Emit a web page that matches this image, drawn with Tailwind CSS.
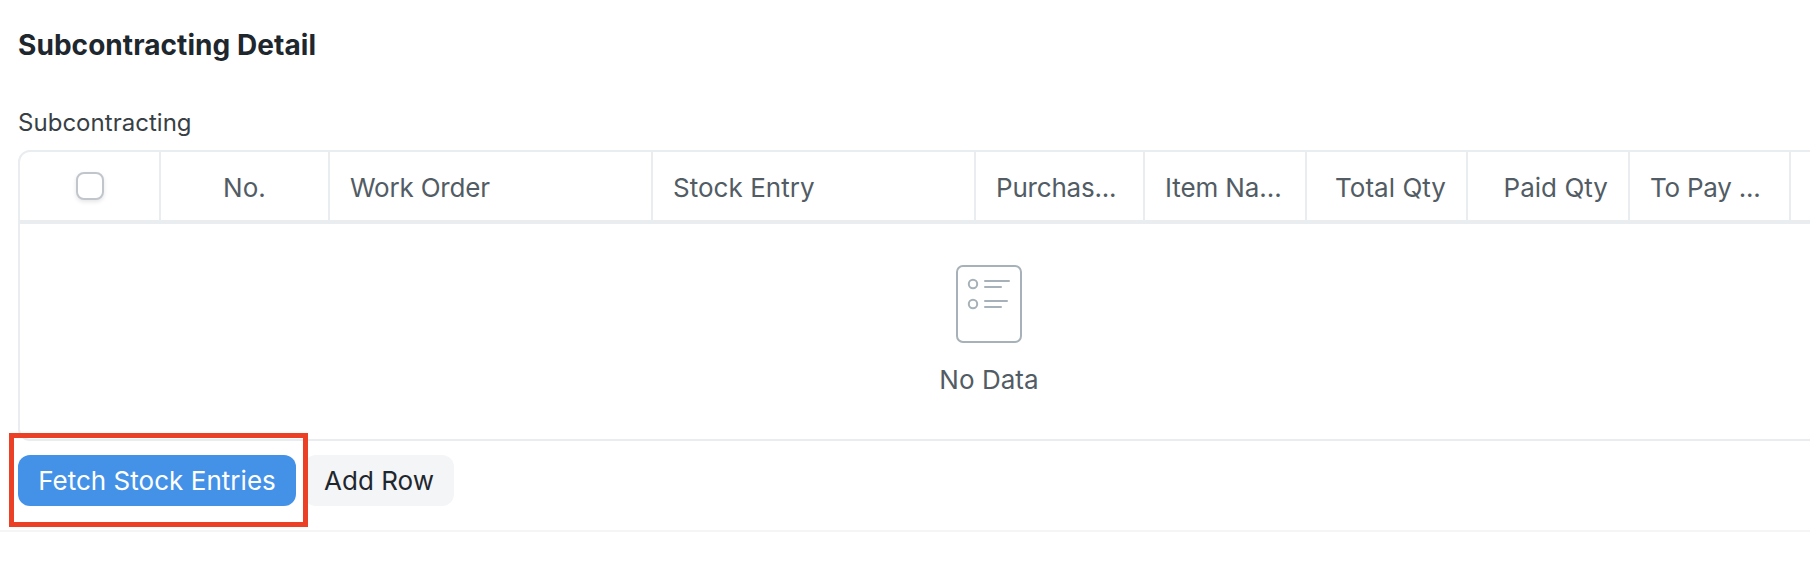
<!DOCTYPE html>
<html lang="en">
<head>
<meta charset="utf-8">
<title>Subcontracting Detail</title>
<script src="https://cdn.jsdelivr.net/npm/@tailwindcss/browser@4"></script>
</head>
<body class="h-[564px] w-[1810px] overflow-hidden bg-white font-['Inter',sans-serif] text-[26px] leading-[40px] tracking-[0.03px] text-[#525c64]">
<section class="h-[532px] overflow-hidden border-b-2 border-[#f4f5f6] pl-[18px]">
  <h2 class="pt-[25px] text-[28px] leading-[40px] font-bold tracking-[0.06px] text-[#1f272e]">Subcontracting Detail</h2>
  <div class="mt-[38px] h-[47px] text-[24px] text-[#383f45]">Subcontracting</div>
  <div class="h-[291px] w-[1940px] rounded-xl border-2 border-[#e9edf0]">
    <div class="flex h-[72px] border-b-4 border-[#e9edf0] *:shrink-0 *:border-r-2 *:border-[#e9edf0] *:px-5 *:pt-[16px] *:whitespace-nowrap">
      <div class="flex w-[141px] justify-center">
        <span class="mt-[4px] h-7 w-7 rounded-lg border-2 border-[#c0c6cc] bg-white shadow-[0_2px_4px_rgba(0,0,0,0.1)]"></span>
      </div>
      <div class="w-[169px] text-center">No.</div>
      <div class="w-[323px] tracking-[-0.2px]">Work Order</div>
      <div class="w-[323px]">Stock Entry</div>
      <div class="w-[169px] tracking-[-0.2px]">Purchas...</div>
      <div class="w-[162px] tracking-[-0.1px]">Item Na...</div>
      <div class="w-[161px] text-right">Total Qty</div>
      <div class="w-[162px] text-right">Paid Qty</div>
      <div class="w-[161px] tracking-[-0.25px]">To Pay ...</div>
    </div>
    <div class="flex w-[1938px] flex-col items-center pt-[41px]">
      <svg class="h-[78px] w-[66px]" viewBox="0 0 66 78" fill="none" stroke="#a6b1b9" stroke-width="2" stroke-linecap="round">
        <rect x="1" y="1" width="64" height="76" rx="6"/>
        <circle cx="17" cy="19" r="4.2"/>
        <circle cx="17" cy="39" r="4.2"/>
        <path d="M29 16H53M29 22H45M29 36H51M29 42H45"/>
      </svg>
      <div class="mt-[17px]">No Data</div>
    </div>
  </div>
  <div class="relative mt-[14px] flex gap-2">
    <button class="h-[51px] w-[278px] rounded-xl bg-[#4492e7] text-white">Fetch Stock Entries</button>
    <button class="h-[51px] w-[150px] rounded-xl bg-[#f4f5f6] text-[#1f272e]">Add Row</button>
    <div class="absolute -top-[22px] -left-[9px] h-[94px] w-[299px] border-5 border-[#ec4026]"></div>
  </div>
</section>
</body>
</html>
